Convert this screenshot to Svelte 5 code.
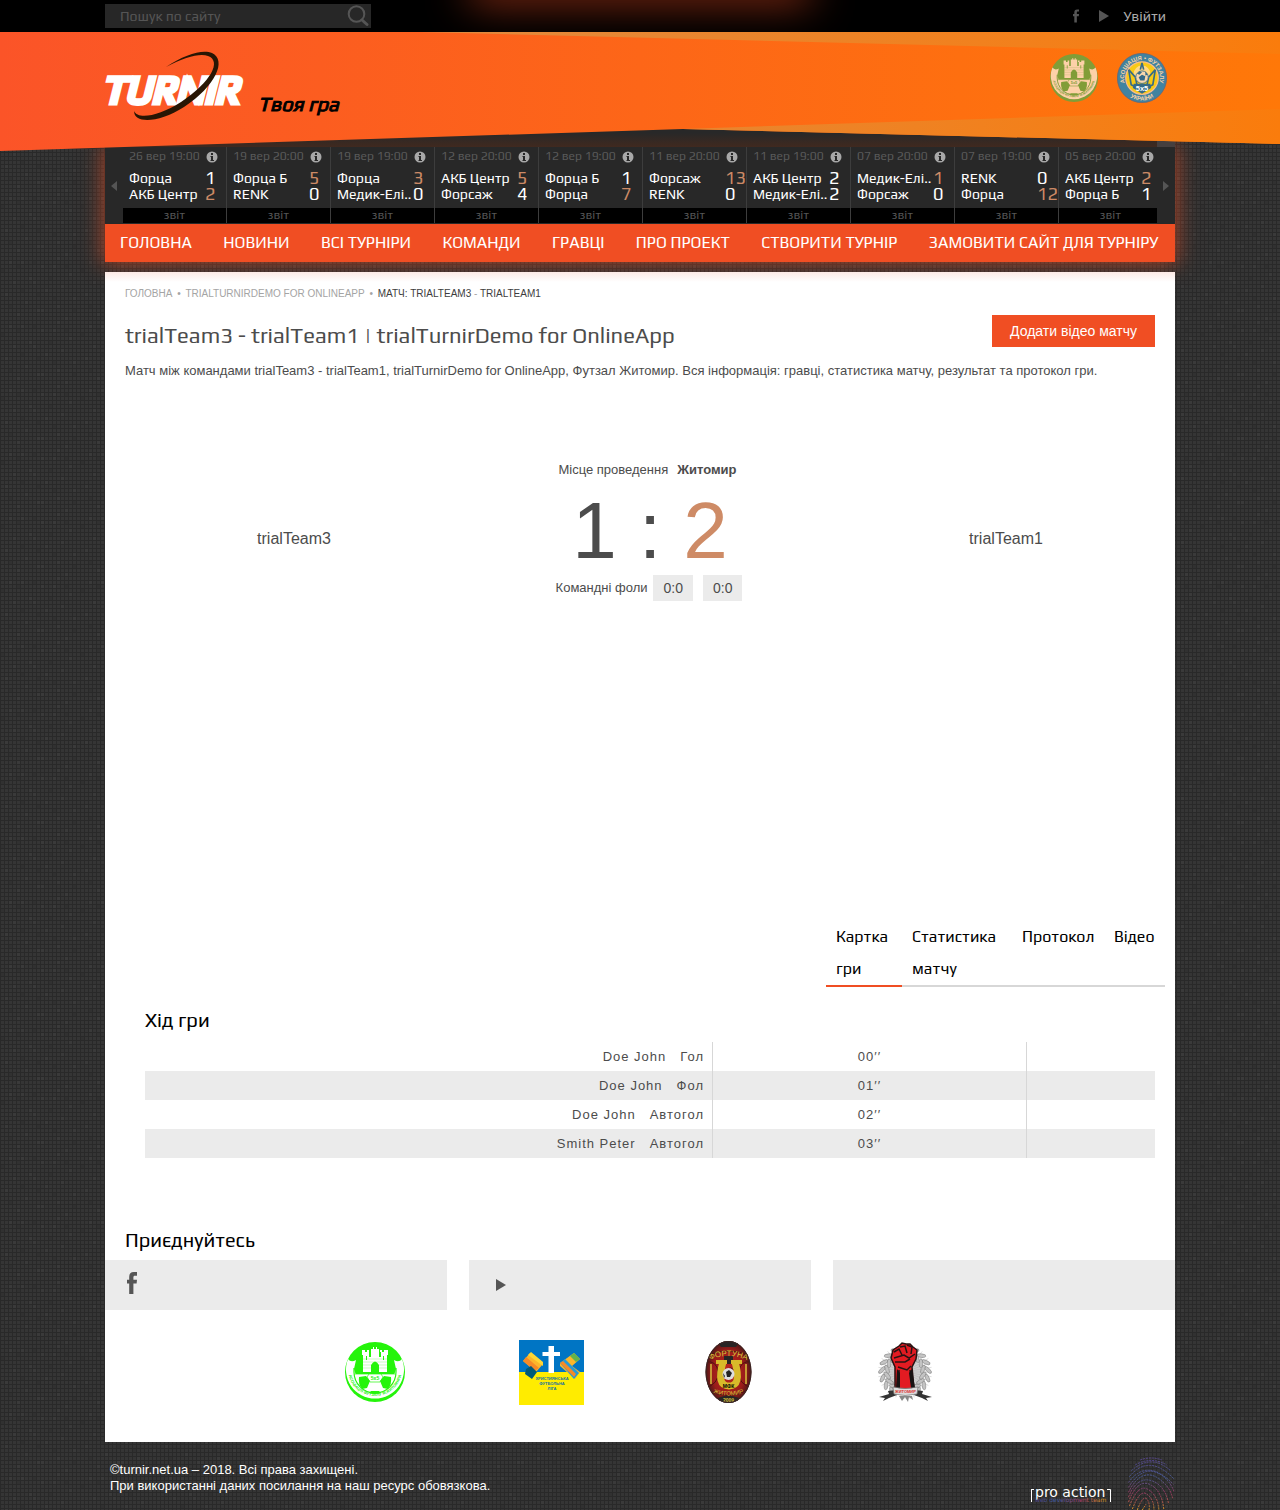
<script>
  const matches = [
    ['26 вер 19:00', 'Форца', 1, 'АКБ Центр', 2],
    ['19 вер 20:00', 'Форца Б', 5, 'RENK', 0],
    ['19 вер 19:00', 'Форца', 3, 'Медик-Елі..', 0],
    ['12 вер 20:00', 'АКБ Центр', 5, 'Форсаж', 4],
    ['12 вер 19:00', 'Форца Б', 1, 'Форца', 7],
    ['11 вер 20:00', 'Форсаж', 13, 'RENK', 0],
    ['11 вер 19:00', 'АКБ Центр', 2, 'Медик-Елі..', 2],
    ['07 вер 20:00', 'Медик-Елі..', 1, 'Форсаж', 0],
    ['07 вер 19:00', 'RENK', 0, 'Форца', 12],
    ['05 вер 20:00', 'АКБ Центр', 2, 'Форца Б', 1]
  ];
  const menu = ['Головна', 'Новини', 'Всі турніри', 'Команди', 'Гравці', 'Про проект', 'Створити турнір', 'Замовити сайт для турніру'];
  const tabs = ['Картка гри', 'Статистика матчу', 'Протокол', 'Відео'];
  const events = [
    ['Doe John', 'Гол', '00′′'],
    ['Doe John', 'Фол', '01′′'],
    ['Doe John', 'Автогол', '02′′'],
    ['Smith Peter', 'Автогол', '03′′']
  ];
  const leaves = [0, 1, 2, 3, 4, 5, 6];
  const rays = Array.from({ length: 36 }, (_, i) => i * 10);
  let active = $state(0);
</script>

{#snippet facebook(cls)}
  <svg class={cls} viewBox="0 0 10 22" aria-hidden="true"><path fill="currentColor" d="M2.2 22V11.5H0V7.8h2.2V5C2.2 1.7 3.7 0 6.8 0H10v3.7H8C6.800 3.7 6.400 4.200 6.400 5.300v2.500H10l-.4 3.700H6.400V22z" /></svg>
{/snippet}

{#snippet play(cls)}
  <svg class={cls} viewBox="0 0 10 12" aria-hidden="true"><path fill="currentColor" d="M0 0l10 6-10 6z" /></svg>
{/snippet}

{#snippet castle(cls, main, light, id)}
  <svg class={cls} viewBox="0 0 60 60" role="img" aria-label="Асоціація футзалу Житомира">
    <circle cx="30" cy="30" r="30" fill={main} />
    <path fill={light} d="M3 17q3 4 8 1l-2 9a21.500 21.500 0 0 0 42 0l-2-9q5 3 8-1a29 29 0 1 1-54 0z" />
    <path fill={light} d="M10 32h40a20 20 0 0 1-40 0z" />
    <path fill="none" stroke={main} stroke-width="1.200" d="M9 26v4a21 21 0 0 0 42 0v-4" />
    <path fill={main} d="M14 35l7-1 4 5-3 7-5 1q-4-5-3-12zM46 35l-7-1-4 5 3 7 5 1q4-5 3-12zM24 51l2-2h8l2 2q-6 2-12 0z" />
    <path fill="none" stroke={main} stroke-width=".7" d="M10 32h40M24 32l-2 3 3 5h10l3-5-2-3" />
    <path fill={light} d="M17 8h3v2h2V8h2v2h2V7h2V5h1v2h2V5h1v2h2v3h1V8h2v2h2V8h4v5h-1v17H18V13h-1z" />
    <path fill={main} d="M24 10h2v5h-2zM34 10h2v5h-2zM26 30v-7q4-7 8 0v7zM21 14h1v4h-1zM38 14h1v4h-1z" />
    <path fill="none" stroke={main} stroke-width=".4" opacity=".6" d="M18 17h24M18 20h24M18 23h8M34 23h8M18 26h8M34 26h8" />
    <path id={id} fill="none" d="M3 27a27 27 0 0 0 54 0" />
    <text class="ring-text" fill={main}><textPath href={'#' + id} startOffset="50%" text-anchor="middle">АСОЦІАЦІЯ ФУТЗАЛУ М.ЖИТОМИРА</textPath></text>
    <text class="mini" x="30" y="38" text-anchor="middle" fill={main}>5x5</text>
  </svg>
{/snippet}

<div class="topbar">
  <div class="wrap topbar-in">
    <form class="search" role="search" onsubmit={(e) => e.preventDefault()}>
      <input type="search" placeholder="Пошук по сайту" aria-label="Пошук по сайту" />
      <button aria-label="Шукати">
        <svg viewBox="0 0 22 22" aria-hidden="true"><circle cx="9.500" cy="9" r="7.800" fill="none" stroke="#555" stroke-width="2" /><path d="M15 15l5 4.500" stroke="#555" stroke-width="3" stroke-linecap="round" /></svg>
      </button>
    </form>
    <div class="account">
      <a href="#facebook" aria-label="Facebook">{@render facebook('fb-small')}</a>
      <a href="#video" aria-label="Відео">{@render play('play-small')}</a>
      <a class="login" href="#login">Увійти</a>
    </div>
  </div>
</div>

<header class="banner">
  <svg class="banner-bg" viewBox="0 0 1280 122" preserveAspectRatio="none" aria-hidden="true">
    <defs>
      <linearGradient id="flame"><stop offset="0" stop-color="#fb5428" /><stop offset="1" stop-color="#ff7808" /></linearGradient>
      <linearGradient id="edge"><stop offset="0" stop-color="#e08a40" /><stop offset="1" stop-color="#fa7c0c" /></linearGradient>
      <linearGradient id="shade" x2="0" y2="1"><stop offset=".6" stop-color="#282828" /><stop offset="1" stop-color="#40291f" /></linearGradient>
    </defs>
    <path fill="url(#shade)" d="M105 80h1070v35H105z" />
    <path fill="#453f3f" d="M1157 100h18v15h-18z" />
    <path fill="url(#flame)" d="M0 0h1280v112L683 97 0 119z" />
    <path fill="url(#edge)" d="M420 0h860v22zM683 97L1280 77v35z" />
  </svg>
  <div class="wrap banner-in">
    <a class="brand" href="#home" aria-label="Turnir">
      <svg viewBox="0 0 144 72">
        <text class="logo-text" x="-3" y="52">TURNIR</text>
        <path fill="#281604" d="M61 16C80 3 98-2 107 2c15 7 4 33-28 54-25 16-50 17-50 4 4 9 25 5 47-9C106 31 117 10 103 5 95 2 80 6 61 16z" />
      </svg>
    </a>
    <span class="slogan">Твоя гра</span>
    <div class="partners">
      <a href="#zhytomyr">{@render castle('crest', '#819d38', '#fdd1a8', 'arc-top')}</a>
      <a href="#afu">
        <svg class="crest crest-wide" viewBox="0 0 60 60" role="img" aria-label="Асоціація футзалу України">
          <circle cx="30" cy="30" r="29.500" fill="#4183a0" stroke="#5f697d" />
          <circle cx="30" cy="30" r="19.500" fill="#f8ca14" stroke="#f7bd8d" stroke-width="1.500" />
          <circle cx="30" cy="25" r="10" fill="#ffd987" />
          <path fill="none" stroke="#366b87" stroke-width="2" d="M14 20l8 9 3 14M46 20l-8 9-3 14M14 20l3 18 9 5M46 20l-3 18-9 5M28 20l2-8 2 8" />
          <circle cx="30" cy="29" r="7.500" fill="#f8d7ae" stroke="#366b87" />
          <path fill="#366b87" d="M30 26l4 2-1 5h-5l-2-4zM24 25l3-3 3 1-3 3zM34 22l3 4-3 1z" />
          <path fill="#366b87" d="M20 37h20l1 5-11 7-11-7z" />
          <text class="mid" x="30" y="45" text-anchor="middle" fill="#fff">5x5</text>
          <path id="afu-top" fill="none" d="M12.400 42.300A21.500 21.500 0 1 1 47.600 42.300" />
          <path id="afu-bot" fill="none" d="M11 49A26.500 26.500 0 0 0 49 49" />
          <text class="ring-bold"><textPath href="#afu-top" startOffset="50%" text-anchor="middle">АСОЦІАЦІЯ • ФУТЗАЛУ</textPath></text>
          <text class="ring-bold"><textPath href="#afu-bot" startOffset="50%" text-anchor="middle">УКРАЇНИ</textPath></text>
        </svg>
      </a>
    </div>
  </div>
</header>

<div class="wrap glow">
  <section class="ticker" aria-label="Останні матчі">
    <button class="arrow" aria-label="Назад"><svg viewBox="0 0 6 10"><path d="M6 0v10L0 5z" fill="#555" /></svg></button>
    <div class="games">
      {#each matches as m}
        <article class="game">
          <div class="date"><span>{m[0]}</span>
            <svg viewBox="0 0 12 12" aria-hidden="true"><circle cx="6" cy="6" r="5.500" fill="#a8a8a8" /><path fill="#272727" d="M5 2h2v2H5zM4.500 5H7v4h1v1H4.500V9H5V6h-.5z" /></svg>
          </div>
          <div class="side"><span>{m[1]}</span><b class:win={m[2] > m[4]}>{m[2]}</b></div>
          <div class="side"><span>{m[3]}</span><b class:win={m[4] > m[2]}>{m[4]}</b></div>
          <a class="report" href="#report">звіт</a>
        </article>
      {/each}
    </div>
    <button class="arrow" aria-label="Вперед"><svg viewBox="0 0 6 10"><path d="M0 0v10l6-5z" fill="#555" /></svg></button>
  </section>
  <nav class="menu">
    {#each menu as item}<a href="#menu">{item}</a>{/each}
  </nav>
</div>

<main class="wrap page">
  <nav class="crumbs" aria-label="Шлях">
    <a href="#home">Головна</a><i>•</i><a href="#tournament">trialTurnirDemo for OnlineApp</a><i>•</i><span>Матч: trialTeam3 <em>-</em> trialTeam1</span>
  </nav>
  <div class="title">
    <h1>trialTeam3 - trialTeam1 | trialTurnirDemo for OnlineApp</h1>
    <button class="add">Додати відео матчу</button>
  </div>
  <p class="lead">Матч між командами trialTeam3 - trialTeam1, trialTurnirDemo for OnlineApp, Футзал Житомир. Вся інформація: гравці, статистика матчу, результат та протокол гри.</p>

  <section class="match">
    <a class="team" href="#team3">trialTeam3</a>
    <div class="result">
      <div class="venue"><span>Місце проведення</span><strong>Житомир</strong></div>
      <div class="score">1 : <span>2</span></div>
      <div class="fouls"><span>Командні фоли</span><span class="box">0:0</span><span class="box">0:0</span></div>
    </div>
    <a class="team" href="#team1">trialTeam1</a>
  </section>

  <div class="tabs" role="tablist">
    {#each tabs as tab, i}
      <button role="tab" aria-selected={active === i} class:active={active === i} onclick={() => (active = i)}>{tab}</button>
    {/each}
  </div>

  <section class="course">
    <h2>Хід гри</h2>
    <table>
      <tbody>
        {#each events as e}
          <tr><td class="who"><span>{e[0]}</span><span>{e[1]}</span></td><td class="time">{e[2]}</td><td></td></tr>
        {/each}
      </tbody>
    </table>
  </section>

  <section>
    <h2 class="join">Приєднуйтесь</h2>
    <div class="social">
      <a href="#facebook" aria-label="Facebook">{@render facebook('fb-big')}</a>
      <a href="#video" aria-label="Відео">{@render play('play-big')}</a>
      <div></div>
    </div>
  </section>

  <div class="leagues">
    <a href="#league1">{@render castle('league', '#25f40b', '#fff', 'arc-low')}</a>
    <a href="#league2">
      <svg class="league-wide" viewBox="0 0 65 65" role="img" aria-label="Християнська футбольна ліга">
        <path fill="#0075c4" d="M0 0h65v33H0z" /><path fill="#ffec00" d="M0 32h65v33H0z" />
        <path fill="#fff" d="M29.500 6h5.500v6h6v4h-6v17h-5.500V16h-6v-4h6z" />
        <path fill="#fbb62b" d="M4 21l7-8 13 11-7 8z" /><path fill="#f58a27" d="M4 21l3-4 13 11-4 3z" /><path fill="#005a78" d="M7 29l5-3 6 6-5 7-7-5z" /><path fill="#ffd633" d="M9 15l3-3 12 10v4z" />
        <path fill="#fbb62b" d="M41 23l14-10 6 6-8 7 8 6-5 7-15-13z" /><path fill="#259bd7" d="M41 23l5-4 14 14-5 6z" /><path fill="#62b34c" d="M51 16l4-3 6 6-4 3z" /><path fill="#f58a27" d="M41 23l3-2 13 13-2 3z" />
        <text class="league-text" text-anchor="middle"><tspan x="33" y="39.500">ХРИСТИЯНСЬКА</tspan><tspan x="33" y="44.500">ФУТБОЛЬНА</tspan><tspan x="33" y="49.500">ЛІГА</tspan></text>
      </svg>
    </a>
    <a href="#league3">
      <svg class="league-wide" viewBox="0 0 65 65" role="img" aria-label="Фортуна Житомир">
        <defs><radialGradient id="ball"><stop offset="0" stop-color="#c0271f" /><stop offset=".7" stop-color="#9a1c1a" /><stop offset="1" stop-color="#451817" /></radialGradient><clipPath id="egg"><ellipse cx="32.500" cy="32" rx="23" ry="31" /></clipPath></defs>
        <g clip-path="url(#egg)">
          <path fill="url(#ball)" d="M9 0h47v65H9z" />
          <path fill="#282525" d="M20 0h25l-5 7H25zM22 58q10-5 21 0l-3 7H24zM28 16h9v8h-9z" />
          <path fill="none" stroke="#4e1411" d="M10 16q22-10 45 0M9 22q12-2 13 10T9 48M56 22q-12-2-13 10t13 16M12 50q20 11 40 0" />
          <path fill="none" stroke="#d8c23c" stroke-width="1.500" d="M15 24v20M50 24v20" />
          <path fill="none" stroke="#d8ba2a" stroke-width="7" d="M27 22q-7 24 6 24t6-24" /><path fill="#d8ba2a" d="M20 20h11v4H20zM35 20h11v4H35z" />
          <circle cx="32.500" cy="34" r="6" fill="#ddd" /><path fill="#222" d="M30 32l3-2 3 3-2 4h-3zM27 33l2 3-1 2zM38 30l-2-2-3-1z" />
          <path id="egg-top" fill="none" d="M10 22q22-12 45 0" /><path id="egg-low" fill="none" d="M13 51q20 9 39 0" />
          <text class="egg-text"><textPath href="#egg-top" startOffset="50%" text-anchor="middle">ФОРТУНА</textPath></text><text class="egg-small"><textPath href="#egg-low" startOffset="50%" text-anchor="middle">ЖИТОМИР</textPath></text>
          <text class="mini" x="32.500" y="48" text-anchor="middle">МФК</text><text class="mini year" x="32.500" y="62" text-anchor="middle">2009</text>
        </g>
        <ellipse cx="32.500" cy="32" rx="22.500" ry="30.500" fill="none" stroke="#3a2725" />
      </svg>
    </a>
    <a href="#league4">
      <svg class="league-wide" viewBox="0 0 65 65" role="img" aria-label="Футбольна ліга">
        {#each rays as r}<path stroke="#c4c4c4" stroke-width=".5" d="M32 32V5" transform={`rotate(${r} 32 32)`} />{/each}
        <circle cx="32" cy="34" r="17" fill="#aaa" opacity=".55" />
        {#each leaves as n}
          <g fill="#c4c4c4" stroke="#777" stroke-width=".5">
            <ellipse cx="9" cy="34" rx="1.800" ry="4.500" transform={`rotate(${-50 + n * 20} 32 32) rotate(35 9 34)`} />
            <ellipse cx="14" cy="34" rx="1.800" ry="4.500" transform={`rotate(${-45 + n * 20} 32 32) rotate(-35 14 34)`} />
            <ellipse cx="55" cy="34" rx="1.800" ry="4.500" transform={`rotate(${50 - n * 20} 32 32) rotate(-35 55 34)`} />
            <ellipse cx="50" cy="34" rx="1.800" ry="4.500" transform={`rotate(${45 - n * 20} 32 32) rotate(35 50 34)`} />
          </g>
        {/each}
        <path fill="#e21b22" stroke="#281313" stroke-width="1.500" d="M22 27l-4-9 2-8 6-4 3-3 4 1 4 0 3 3 4 3-1 9-4 8 2 22H22z" />
        <path fill="none" stroke="#281313" stroke-width="1.500" d="M21 12l5-3 3 6M27 7l5-1 2 7M34 5l5 2-1 7M21 18l10-3 5 3 6-4M22 22l10 0 5-3M25 27l9 3 4-4M26 30v16M37 30l2 16" />
        <path fill="#181313" d="M24 29l3 4v15h-4zM39 29l-3 4 2 15h4z" />
        <path fill="#333" d="M6 57l10-3-1-3 8-1 1 5-8 3-6 3 2-3zM59 57l-10-3 1-3-8-1-1 5 8 3 6 3-2-3z" />
        <path fill="#ddd" stroke="#777" stroke-width=".7" d="M20 47q12 3 25 0l-1 7q-12 3-23 0z" />
        <text class="mini banner-text" x="32.500" y="53" text-anchor="middle">ЖИТОМИР</text>
        <path fill="#888" d="M26 56l3 5 3-4 3 5 1-5 4 3-1-4z" />
      </svg>
    </a>
  </div>
</main>

<footer class="wrap foot">
  <p>©turnir.net.ua – 2018. Всі права захищені.<br />При використанні даних посилання на наш ресурс обовязкова.</p>
  <a class="maker" href="#proaction" aria-label="pro action web development team">
    <svg class="maker-name" viewBox="0 0 80 18">
      <defs><linearGradient id="rainbow"><stop offset="0" stop-color="#514286" /><stop offset=".3" stop-color="#405eaa" /><stop offset=".65" stop-color="#af3e73" /><stop offset="1" stop-color="#e6a219" /></linearGradient></defs>
      <path fill="none" stroke="#fff" d="M.5 3v13M1 3.500h2M76 3.500h3.500V16" />
      <text class="pro" x="4" y="11">pro action</text>
      <text class="web" x="4" y="16" fill="url(#rainbow)">web development team</text>
    </svg>
    <svg class="print" viewBox="0 0 48 54" aria-hidden="true">
      <defs><linearGradient id="ink" gradientUnits="userSpaceOnUse" x1="0" y1="0" x2="0" y2="54"><stop offset="0" stop-color="#5d4697" /><stop offset=".4" stop-color="#4c62a4" /><stop offset=".65" stop-color="#a83c72" /><stop offset=".85" stop-color="#c25a50" /><stop offset="1" stop-color="#e0a01c" /></linearGradient></defs>
      <g fill="none" stroke="url(#ink)" stroke-width="1" stroke-dasharray="2 1" opacity=".9">
        <path d="M13 3q11-4 22 0M8 8q16-9 32 0M4 14Q24-4 44 14M2 20Q22-4 47 22M1 26Q20 0 47 28M1 31Q18 4 38 21q8 8 9 14M1 36Q14 10 32 22q12 9 14 20M1 41Q10 18 27 25q12 6 15 23M1 46q9-24 22-18 12 6 14 25M2 50q9-23 19-17 10 6 11 21M5 53q8-21 15-15 7 5 7 16M10 54q6-16 10-11 3 4 2 11M15 54l4-6" />
      </g>
    </svg>
  </a>
</footer>

<style>
  :global(body) {
    margin: 0;
    color: #4c4c4c;
    font: 13px/16px 'Liberation Sans', Arial, sans-serif;
    background: #292929 url("data:image/svg+xml,%3Csvg xmlns='http://www.w3.org/2000/svg' width='80' height='64'%3E%3Cdefs%3E%3Cpattern id='p' width='4' height='4' patternUnits='userSpaceOnUse'%3E%3Cpath fill='%23353535' d='M1 1h3v3H1z'/%3E%3C/pattern%3E%3C/defs%3E%3Cpath fill='url(%23p)' d='M0 0h80v64H0z'/%3E%3Cpath fill='%233a3a3a' d='M9 5h3v3H9zM21 5h3v3h-3zM57 1h3v3h-3zM41 9h3v3h-3zM53 9h3v3h-3zM69 17h3v3h-3zM13 25h3v3h-3zM29 21h3v3h-3zM33 25h3v3h-3zM61 29h3v3h-3zM5 37h3v3H5zM45 33h3v3h-3zM73 41h3v3h-3zM25 45h3v3h-3zM37 53h3v3h-3zM41 53h3v3h-3zM57 49h3v3h-3zM17 57h3v3h-3zM65 61h3v3h-3z'/%3E%3Cpath fill='%23313131' d='M1 13h3v3H1zM17 9h3v3h-3zM33 5h3v3h-3zM49 21h3v3h-3zM65 9h3v3h-3zM21 33h3v3h-3zM53 41h3v3h-3zM9 49h3v3H9zM73 53h3v3h-3zM37 37h3v3h-3z'/%3E%3C/svg%3E");
  }
  a { color: inherit; text-decoration: none; }
  button { border: 0; padding: 0; background: none; color: inherit; font: inherit; cursor: pointer; }
  svg { display: block; }
  h1, h2, p { margin: 0; font-weight: 400; }
  .wrap { box-sizing: border-box; width: 100%; max-width: 1070px; margin: 0 auto; }

  .topbar { position: relative; overflow: hidden; background: #000; }
  .topbar::before { position: absolute; top: -20px; left: 50%; width: 340px; height: 20px; margin-left: -170px; box-shadow: 0 0 40px rgba(240, 78, 35, 0.8); content: ''; }
  .topbar-in { display: flex; justify-content: space-between; align-items: center; height: 32px; }
  .search { display: flex; align-items: center; width: 266px; height: 24px; background: #272727; }
  .search input { flex: 1; min-width: 0; padding: 0 0 0 15px; border: 0; outline: 0; background: none; color: #999; font: 14px/24px Play, Roboto, sans-serif; }
  .search input::placeholder { color: #555; opacity: 1; }
  .search svg { width: 22px; height: 22px; margin-right: 2px; }
  .account { display: flex; align-items: center; padding-right: 9px; color: #555; }
  .fb-small { width: 6px; height: 14px; margin-right: 20px; }
  .play-small { width: 10px; height: 12px; margin-right: 15px; }
  .login { color: #aaa; font: 14px/20px Play, Roboto, sans-serif; }

  .banner { display: grid; height: 115px; }
  .banner-bg, .banner-in { grid-area: 1 / 1; }
  .banner-bg { width: 100%; height: 122px; z-index: 1; }
  .banner-in { display: flex; align-items: flex-start; z-index: 2; padding-top: 19px; }
  .brand svg { width: 144px; height: 72px; overflow: visible; }
  .logo-text { font: italic 400 39px Play, 'Liberation Sans', sans-serif; fill: #fff; stroke: #fff; stroke-width: 5; }
  .slogan { margin: 40px 0 0 9px; color: #000; font: italic 400 20px/26px Play, Roboto, sans-serif; -webkit-text-stroke: 1px #000; }
  .partners { display: flex; gap: 19px; margin: 2px 8px 0 auto; }
  .crest { width: 48px; height: 50px; }
  .crest-wide { width: 50px; }
  .ring-text { font: 700 4px 'Liberation Sans', sans-serif; }
  .mini { font: 700 5px 'Liberation Sans', sans-serif; }
  .mid { font: 700 9px 'Liberation Sans', sans-serif; }
  .ring-bold { font: 700 7px 'Liberation Sans', sans-serif; fill: #f7d3a8; }

  .glow { box-shadow: 0 0 20px 2px rgba(240, 78, 35, 0.6); }
  .ticker { display: flex; height: 77px; background: #282828; font-family: Play, Roboto, sans-serif; }
  .arrow { display: grid; place-items: center; flex: 0 0 18px; }
  .arrow svg { width: 6px; height: 10px; }
  .games { display: flex; flex: 1; min-width: 0; overflow: hidden; }
  .game { box-sizing: border-box; display: flex; flex: 0 0 104px; flex-direction: column; height: 76px; border-right: 1px solid #3d3d3d; }
  .date { display: flex; align-items: center; justify-content: space-between; padding: 2px 8px 6px 6px; color: #5a5a5a; font-size: 12px; line-height: 15px; }
  .date svg { width: 12px; height: 12px; }
  .side { display: grid; grid-template-columns: 76px 1fr; padding-left: 6px; color: #fff; font-size: 14px; line-height: 16px; white-space: nowrap; }
  .side b { font-size: 18px; font-weight: 400; }
  .side .win { color: #cc8a66; }
  .report { margin-top: auto; background: #000; color: #555; font-size: 12px; line-height: 15px; text-align: center; }
  .menu { display: flex; justify-content: space-between; padding: 0 17px 0 15px; background: #f04e23; color: #fff; font: 16px/38px Play, Roboto, sans-serif; text-transform: uppercase; white-space: nowrap; }

  .page { margin-top: 10px; padding-top: 15px; background: linear-gradient(#fdeae5, #fff 10px); }
  .crumbs { display: flex; padding-left: 20px; color: #a4a4a4; font-size: 10px; line-height: 14px; text-transform: uppercase; }
  .crumbs i { width: 13px; font-style: normal; text-align: center; }
  .crumbs span { color: #3d3d3d; }
  .crumbs em { color: #a4a4a4; font-style: normal; }
  .title { display: flex; justify-content: space-between; align-items: flex-start; padding: 14px 20px 0; }
  h1 { font: 22px/40px Play, Roboto, sans-serif; }
  .add { width: 163px; background: #f04e23; color: #fff; font-size: 14px; line-height: 32px; }
  .lead { padding: 8px 20px 0; }

  .match { display: grid; grid-template-columns: 1fr 374px 1fr; padding: 83px 0 320px 20px; text-align: center; }
  .team { padding-top: 66px; font-size: 16px; line-height: 22px; }
  .venue { display: flex; justify-content: center; gap: 9px; padding-right: 5px; }
  .score { padding-top: 9px; font-size: 80px; line-height: 88px; }
  .score span { color: #ce8b66; }
  .fouls { display: flex; justify-content: center; align-items: center; gap: 10px; padding-right: 2px; line-height: 26px; }
  .fouls span:first-child { margin-right: -4px; }
  .box { padding: 0 10px; background: #ebebeb; font-size: 14px; }

  .tabs { display: grid; grid-template-columns: 76px 110px 92px 61px; justify-content: end; padding-right: 10px; color: #000; font: 16px/32px Play, Roboto, sans-serif; }
  .tabs button { display: flex; align-items: flex-start; padding: 0 10px; border-bottom: 2px solid #d7d7d7; text-align: left; }
  .tabs .active { border-color: #f04e23; }
  .course { padding: 20px 20px 0 40px; }
  h2 { color: #000; font: 20px/26px Play, Roboto, sans-serif; }
  table { width: 100%; margin-top: 9px; border-collapse: collapse; table-layout: fixed; letter-spacing: 1px; line-height: 29px; }
  td { height: 29px; padding: 0; }
  tr:nth-child(even) { background: #ebebeb; }
  .who { width: 559px; padding-right: 8px; border-right: 1px solid #d7d7d7; text-align: right; }
  .who span + span { margin-left: 14px; }
  .time { width: 313px; border-right: 1px solid #d7d7d7; text-align: center; }
  .join { padding: 69px 20px 7px; }
  .social { display: grid; grid-template-columns: 1fr 1fr 1fr; gap: 22px; color: #555; }
  .social > * { height: 50px; background: #ebebeb; }
  .fb-big { width: 10px; height: 22px; margin: 12px 22px; }
  .play-big { width: 10px; height: 12px; margin: 19px 27px; }
  .leagues { display: grid; grid-template-columns: repeat(4, 177px); justify-content: center; justify-items: center; padding: 30px 0 37px; }
  .league { width: 60px; height: 60px; margin-top: 2px; }
  .league-wide { width: 65px; height: 65px; }
  .league-text { font: 700 4px 'Liberation Sans', sans-serif; fill: #1470a0; }
  .egg-text { font: 8px 'Liberation Sans', sans-serif; fill: #d8c23c; }
  .egg-small { font: 6px 'Liberation Sans', sans-serif; fill: #d8c23c; }
  .year { fill: #d8c23c; }
  .banner-text { font-size: 4px; fill: #d33; }

  .foot { display: flex; justify-content: space-between; padding: 15px 0 0 5px; color: #fff; }
  .foot p { padding-top: 5px; }
  .maker { display: flex; align-items: flex-end; gap: 16px; }
  .maker-name { width: 80px; height: 18px; margin-bottom: 6px; overflow: visible; }
  .pro { font: 14px 'DejaVu Sans', sans-serif; fill: #fff; }
  .web { font: 6px 'DejaVu Sans', sans-serif; }
  .print { width: 48px; height: 53px; }
</style>
